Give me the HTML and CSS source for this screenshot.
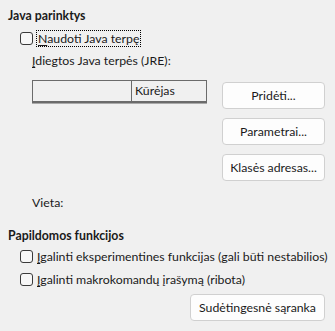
FILE: index.html
```html
<!DOCTYPE html>
<html>
<head>
<meta charset="utf-8">
<link rel="stylesheet" href="styles.css">
</head>
<body>
<div class="page">
  <section class="group">
    <div class="heading">Java parinktys</div>
    <div class="group-body">
      <label class="check check-java"><span class="box"></span><span class="focus"><u>N</u>audoti Java terpę</span></label>
      <div class="indent">
        <div class="label"><u>Į</u>diegtos Java terpės (JRE):</div>
        <div class="jre">
          <div class="table-col">
            <div class="table">
              <div class="th th-first"></div>
              <div class="th">Kūrėjas</div>
            </div>
            <div class="vieta">Vieta:</div>
          </div>
          <div class="buttons">
            <button class="btn">Pridėti...</button>
            <button class="btn">Parametrai...</button>
            <button class="btn">Klasės adresas...</button>
          </div>
        </div>
      </div>
    </div>
  </section>
  <section class="group group2">
    <div class="heading">Papildomos funkcijos</div>
    <div class="group-body">
      <label class="check check-exp"><span class="box"></span><span><u>Į</u>galinti eksperimentines funkcijas (gali būti nestabilios)</span></label>
      <label class="check check-macro"><span class="box"></span><span><u>Į</u>galinti makrokomandų įrašymą (ribota)</span></label>
      <div class="adv-row"><button class="btn btn-adv">Sudėtingesnė sąranka</button></div>
    </div>
  </section>
</div>
</body>
</html>
```
FILE: styles.css
```css
html, body {
  margin: 0;
  padding: 0;
  background: #f0f0f0;
}
body {
  font-family: "Lato", "Noto Sans", sans-serif;
  font-size: 12.3px;
  color: #1a1a1a;
  width: 335px;
  height: 331px;
  overflow: hidden;
  white-space: nowrap;
}
u { text-decoration: underline; text-underline-offset: 2px; text-decoration-thickness: 1px; }
.page {
  padding: 8px 10px 0 8px;
}
.heading {
  font-weight: bold;
  height: 16px;
  line-height: 16px;
}
.group-body {
  padding-left: 12px;
}
.check {
  display: flex;
  align-items: center;
  gap: 4px;
  height: 17px;
}
.check-java { margin-top: 6px; }
.check-exp { margin-top: 4px; }
.check-macro { margin-top: 6px; }
.box {
  width: 11px;
  height: 11px;
  border: 1px solid #3a3a3a;
  border-radius: 3px;
  background: #f7f7f7;
  flex: none;
}
.focus {
  outline: 1px dotted #000;
  padding: 0 1px;
  line-height: 15px;
}
.indent {
  padding-left: 12px;
}
.label {
  margin-top: 6px;
  line-height: 16px;
}
.jre {
  display: flex;
  justify-content: space-between;
  margin-top: 11px;
}
.table-col {
  display: flex;
  flex-direction: column;
}
.table {
  display: flex;
  width: 173px;
  height: 20px;
  border: 1px solid #6b6b6b;
  border-bottom: 2px solid #6b6b6b;
  box-shadow: 0 1px 0 #a9a9a9;
  box-sizing: content-box;
}
.th {
  line-height: 20px;
  padding-left: 3px;
  flex: 1;
}
.th-first {
  flex: none;
  width: 98px;
  border-right: 1px solid #6b6b6b;
  padding: 0;
}
.vieta {
  margin-top: 92px;
  line-height: 16px;
}
.buttons {
  display: flex;
  flex-direction: column;
  gap: 9px;
  padding-top: 2px;
}
.btn {
  font: inherit;
  color: #1a1a1a;
  width: 103px;
  height: 27px;
  background: #fdfdfd;
  border: 1px solid #d0d0d0;
  border-radius: 4px;
  padding: 0;
}
.group2 {
  margin-top: 17px;
}
.adv-row {
  display: flex;
  justify-content: flex-end;
  margin-top: 6px;
}
.btn-adv {
  width: 135px;
}
```
